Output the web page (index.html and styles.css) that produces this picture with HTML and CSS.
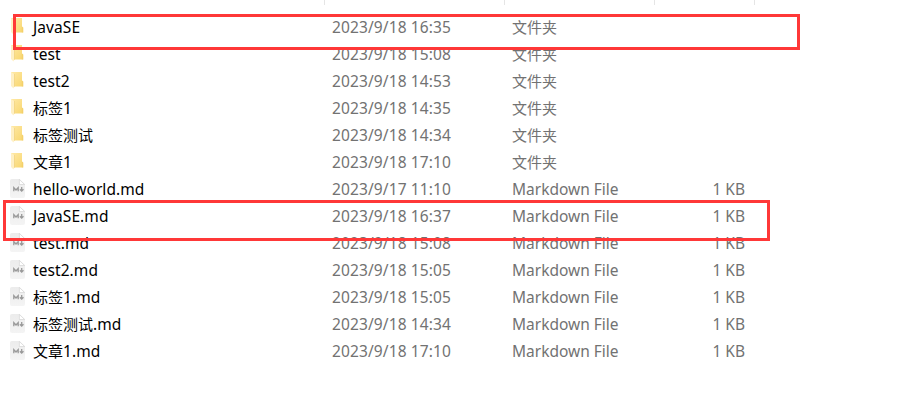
FILE: index.html
```
<!DOCTYPE html>
<html lang="zh-CN">
<head>
<meta charset="utf-8">
<title>文件夹</title>
<link rel="stylesheet" href="styles.css">
</head>
<body>
<svg class="defs" width="0" height="0" aria-hidden="true">
<defs>
<linearGradient id="gold" x1="0" y1="0" x2="1" y2="1"><stop offset="0" stop-color="#ffe9a6"/><stop offset="1" stop-color="#f8d66e"/></linearGradient>
<linearGradient id="paper" x1="0" y1="0" x2="0" y2="1"><stop offset="0" stop-color="#ececec"/><stop offset="1" stop-color="#f4f4f4"/></linearGradient>
<symbol id="folder" viewBox="0 0 15 19"><path fill="url(#gold)" d="M1 1h11v8.500l1.200 1V15.500H3z"/><path fill="#f0cb66" d="M11.800 9.500l1.400 1v5h-1.400z" opacity=".6"/><path fill="#fff0c4" d="M1 1l3.200 2v12.500L3.500 17.500 1 15z"/><path fill="#efcf7c" d="M4 3h.6v12.500l-.6.7z"/></symbol>
<symbol id="md" viewBox="0 0 15 19"><path fill="url(#paper)" d="M1.800 0H9.500L15 5.300V17q0 2-2 2H2Q0 19 0 17V1.800Q0 0 1.800 0z"/><path fill="#fff" stroke="#cfcfcf" stroke-width=".6" d="M9.400.5v5h5.200z"/><path fill="none" stroke="#999999" stroke-width="1.300" d="M3.800 12.300V8.700L6 11 8.200 8.700V12.300M11.700 8v3.900M9.900 10.300l1.800 1.800 1.800-1.800"/></symbol>
</defs>
</svg>
<main class="explorer">
<div class="columns"><i></i><i></i><i></i><i></i></div>
<div class="row"><svg class="icon"><use href="#folder"/></svg><span class="name">JavaSE</span><span class="date">2023/9/18 16:35</span><span class="type zh">文件夹</span><span class="size"></span></div>
<div class="row"><svg class="icon"><use href="#folder"/></svg><span class="name">test</span><span class="date">2023/9/18 15:08</span><span class="type zh">文件夹</span><span class="size"></span></div>
<div class="row"><svg class="icon"><use href="#folder"/></svg><span class="name">test2</span><span class="date">2023/9/18 14:53</span><span class="type zh">文件夹</span><span class="size"></span></div>
<div class="row"><svg class="icon"><use href="#folder"/></svg><span class="name"><span class="zh">标签</span>1</span><span class="date">2023/9/18 14:35</span><span class="type zh">文件夹</span><span class="size"></span></div>
<div class="row"><svg class="icon"><use href="#folder"/></svg><span class="name"><span class="zh">标签测试</span></span><span class="date">2023/9/18 14:34</span><span class="type zh">文件夹</span><span class="size"></span></div>
<div class="row"><svg class="icon"><use href="#folder"/></svg><span class="name"><span class="zh">文章</span>1</span><span class="date">2023/9/18 17:10</span><span class="type zh">文件夹</span><span class="size"></span></div>
<div class="row"><svg class="icon"><use href="#md"/></svg><span class="name">hello-world.md</span><span class="date">2023/9/17 11:10</span><span class="type">Markdown File</span><span class="size">1 KB</span></div>
<div class="row"><svg class="icon"><use href="#md"/></svg><span class="name">JavaSE.md</span><span class="date">2023/9/18 16:37</span><span class="type">Markdown File</span><span class="size">1 KB</span></div>
<div class="row"><svg class="icon"><use href="#md"/></svg><span class="name">test.md</span><span class="date">2023/9/18 15:08</span><span class="type">Markdown File</span><span class="size">1 KB</span></div>
<div class="row"><svg class="icon"><use href="#md"/></svg><span class="name">test2.md</span><span class="date">2023/9/18 15:05</span><span class="type">Markdown File</span><span class="size">1 KB</span></div>
<div class="row"><svg class="icon"><use href="#md"/></svg><span class="name"><span class="zh">标签</span>1.md</span><span class="date">2023/9/18 15:05</span><span class="type">Markdown File</span><span class="size">1 KB</span></div>
<div class="row"><svg class="icon"><use href="#md"/></svg><span class="name"><span class="zh">标签测试</span>.md</span><span class="date">2023/9/18 14:34</span><span class="type">Markdown File</span><span class="size">1 KB</span></div>
<div class="row"><svg class="icon"><use href="#md"/></svg><span class="name"><span class="zh">文章</span>1.md</span><span class="date">2023/9/18 17:10</span><span class="type">Markdown File</span><span class="size">1 KB</span></div>
<div class="mark mark-folder"></div>
<div class="mark mark-file"></div>
</main>
</body>
</html>
```
FILE: styles.css
```
body {
  margin: 0;
  background: #fff;
  font: 15.5px/27px "Noto Sans", "Noto Sans CJK SC", sans-serif;
  color: #000;
}
.defs { position: absolute; }
.explorer {
  position: relative;
  height: 405px;
  overflow: hidden;
}
.columns {
  display: grid;
  grid-template-columns: 325px 180px 150px 100px;
  height: 5px;
  margin-bottom: 9px;
}
.columns i { border-right: 1px solid #e5e5e5; }
.row {
  display: grid;
  grid-template-columns: 23px 299px 180px 143px 90px;
  height: 27px;
  padding-left: 10px;
  white-space: nowrap;
}
.icon {
  width: 15px;
  height: 19px;
  margin-top: 3px;
}
.name { letter-spacing: 0.08px; }
.date, .type, .size { color: #727272; }
.date { letter-spacing: 0.12px; }
.size { text-align: right; }
.zh {
  font-family: "Noto Sans CJK SC", sans-serif;
  font-size: 15px;
  letter-spacing: 0;
  line-height: 1;
}
.type.zh { line-height: 25px; }
.mark {
  position: absolute;
  box-sizing: border-box;
  border: 3px solid #ff3838;
}
.mark-folder {
  left: 13px;
  top: 14px;
  width: 787px;
  height: 36px;
}
.mark-file {
  left: 3px;
  top: 200px;
  width: 767px;
  height: 41px;
}
```
